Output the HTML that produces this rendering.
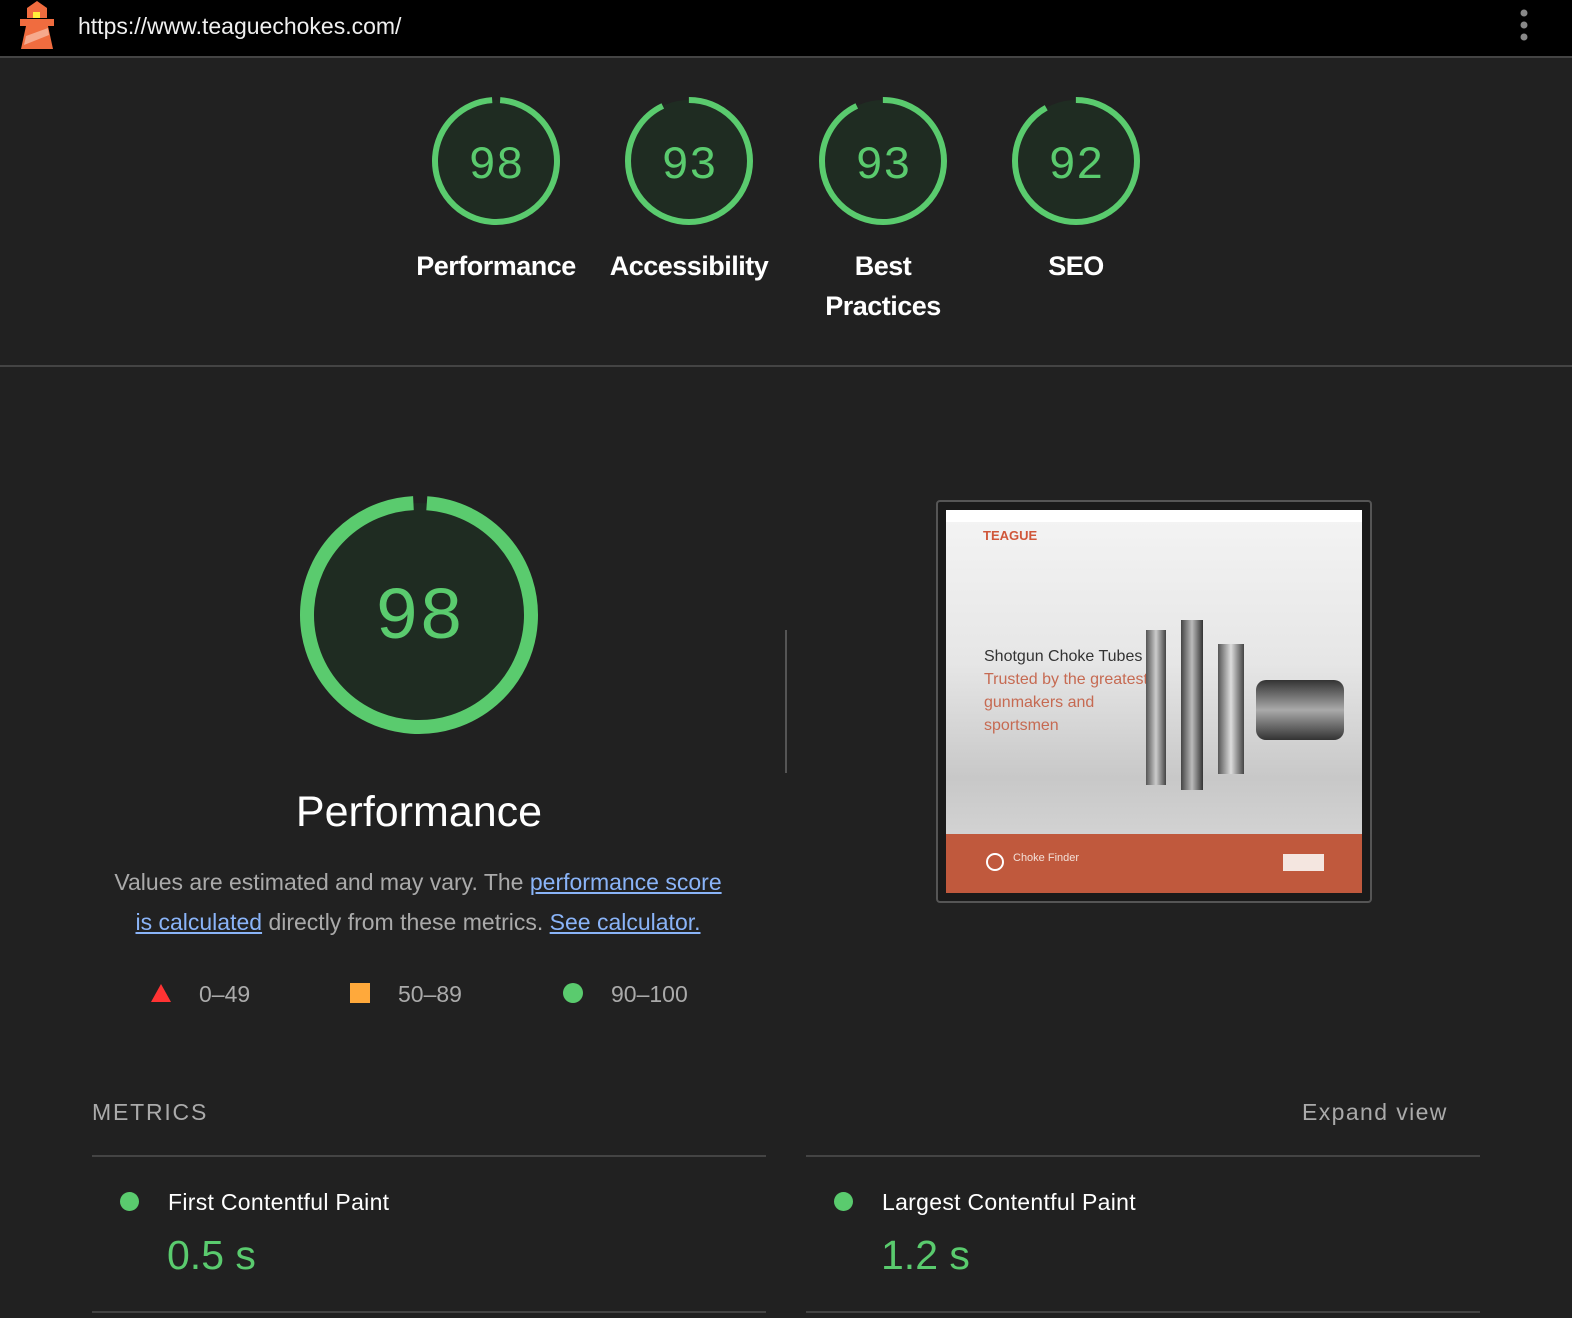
<!DOCTYPE html><html><head><style>
*{margin:0;padding:0;box-sizing:border-box}
body{width:1572px;height:1318px;background:#212121;font-family:"Liberation Sans",sans-serif;color:#fff;position:relative;overflow:hidden}
.top{position:absolute;left:0;top:0;width:1572px;height:58px;background:#000;border-bottom:2px solid #444}
.url{position:absolute;left:78px;top:13px;font-size:23px;color:#f0f0f0}
.g{position:absolute;text-align:center;font-size:27px;line-height:40px;width:200px;font-weight:bold;letter-spacing:-0.5px}
.ab{position:absolute}
</style></head><body>
<div class="top">
<svg style="position:absolute;left:20px;top:1px" width="34" height="49" viewBox="0 0 34 49"><polygon points="17,0 27,7 27,17 7,17 7,7" fill="#f06c3f"/><rect x="13" y="11" width="7" height="6" fill="#ffee3a"/><rect x="0" y="18" width="34" height="7" fill="#f06c3f"/><polygon points="6,25 28,25 33,48 1,48" fill="#f06c3f"/><polygon points="6,35 28,27 29,34 4,44" fill="#f6a98d"/></svg>
<div class="url">https://www.teaguechokes.com/</div>
<svg style="position:absolute;left:1519px;top:8px" width="10" height="36"><circle cx="5" cy="5" r="3.5" fill="#888"/><circle cx="5" cy="17" r="3.5" fill="#888"/><circle cx="5" cy="29" r="3.5" fill="#888"/></svg>
</div>
<svg style="position:absolute;left:0;top:58px" width="1572" height="260">
<g fill="#1f2c22" stroke="#5acb6e" stroke-width="6">
<circle cx="496" cy="103" r="61" stroke-dasharray="375 8" transform="rotate(-86 496 103)"/>
<circle cx="689" cy="103" r="61" stroke-dasharray="356 27" transform="rotate(-90 689 103)"/>
<circle cx="883" cy="103" r="61" stroke-dasharray="356 27" transform="rotate(-90 883 103)"/>
<circle cx="1076" cy="103" r="61" stroke-dasharray="352 31" transform="rotate(-90 1076 103)"/>
</g>
<g fill="#5acb6e" font-family="Liberation Mono, monospace" font-size="46" text-anchor="middle">
<text x="496" y="120">98</text><text x="689" y="120">93</text><text x="883" y="120">93</text><text x="1076" y="120">92</text></g>
</svg>
<div class="g" style="left:396px;top:246px">Performance</div>
<div class="g" style="left:589px;top:246px">Accessibility</div>
<div class="g" style="left:783px;top:246px">Best<br>Practices</div>
<div class="g" style="left:976px;top:246px">SEO</div>
<div style="position:absolute;left:0;top:365px;width:1572px;height:2px;background:#444"></div>
<svg style="position:absolute;left:290px;top:490px" width="260" height="260">
<circle cx="129" cy="125" r="112" fill="#1f2c22" stroke="#5acb6e" stroke-width="14" stroke-dasharray="690 14" transform="rotate(-86 129 125)"/>
<text x="129" y="148" fill="#5acb6e" font-family="Liberation Mono, monospace" font-size="74" text-anchor="middle">98</text></svg>
<div style="position:absolute;left:219px;top:788px;width:400px;text-align:center;font-size:43px">Performance</div>
<div style="position:absolute;left:68px;top:862px;width:700px;text-align:center;font-size:23px;line-height:40px;color:#aaa;white-space:nowrap">Values are estimated and may vary. The <u style="color:#8ab4f8">performance score</u><br><u style="color:#8ab4f8">is calculated</u> directly from these metrics. <u style="color:#8ab4f8">See calculator.</u></div>
<svg style="position:absolute;left:150px;top:983px" width="22" height="20"><polygon points="11,1 21,19 1,19" fill="#f33"/></svg>
<div class="ab" style="left:199px;top:981px;font-size:23px;color:#aaa">0–49</div>
<div class="ab" style="left:350px;top:983px;width:20px;height:20px;background:#ffa93b"></div>
<div class="ab" style="left:398px;top:981px;font-size:23px;color:#aaa">50–89</div>
<div class="ab" style="left:563px;top:983px;width:20px;height:20px;border-radius:50%;background:#5acb6e"></div>
<div class="ab" style="left:611px;top:981px;font-size:23px;color:#aaa">90–100</div>
<div class="ab" style="left:785px;top:630px;width:2px;height:143px;background:#555"></div>
<div class="ab" style="left:936px;top:500px;width:436px;height:403px;border:2px solid #555;border-radius:4px;background:#1a1a1a"></div>
<div class="ab" style="left:946px;top:510px;width:416px;height:383px;background:linear-gradient(#f4f4f4,#e6e6e6 40%,#c8c8c8 70%,#ddd)">
<div style="height:12px;background:#fff"></div>
<div style="position:absolute;left:37px;top:18px;color:#d0573a;font-weight:bold;font-size:13px">TEAGUE</div>
<div style="position:absolute;left:38px;top:135px;font-size:16px;color:#333;line-height:23px">Shotgun Choke Tubes<br><span style="color:#c66a52">Trusted by the greatest<br>gunmakers and<br>sportsmen</span></div>
<div style="position:absolute;left:200px;top:120px;width:20px;height:155px;background:linear-gradient(90deg,#555,#ccc,#444)"></div>
<div style="position:absolute;left:235px;top:110px;width:22px;height:170px;background:linear-gradient(90deg,#444,#bbb,#333)"></div>
<div style="position:absolute;left:272px;top:134px;width:26px;height:130px;background:linear-gradient(90deg,#555,#ddd,#444)"></div>
<div style="position:absolute;left:310px;top:170px;width:88px;height:60px;background:linear-gradient(#333,#aaa,#333);border-radius:10px"></div>
<div style="position:absolute;left:0;top:324px;width:416px;height:59px;background:#c0593d"></div>
<div style="position:absolute;left:67px;top:342px;font-size:11px;color:#f3e0d8">Choke Finder</div>
<div style="position:absolute;left:337px;top:344px;width:41px;height:17px;background:#f4e6e0"></div>
<div style="position:absolute;left:40px;top:343px;width:18px;height:18px;border:2px solid #fff;border-radius:50%"></div>
</div>
<div class="ab" style="left:92px;top:1099px;font-size:23px;letter-spacing:1.8px;color:#aaa">METRICS</div>
<div class="ab" style="left:1302px;top:1099px;font-size:23px;letter-spacing:1.4px;color:#aaa">Expand view</div>
<div class="ab" style="left:92px;top:1155px;width:674px;height:2px;background:#444"></div>
<div class="ab" style="left:806px;top:1155px;width:674px;height:2px;background:#444"></div>
<div class="ab" style="left:92px;top:1311px;width:674px;height:2px;background:#444"></div>
<div class="ab" style="left:806px;top:1311px;width:674px;height:2px;background:#444"></div>
<div class="ab" style="left:120px;top:1192px;width:19px;height:19px;border-radius:50%;background:#5acb6e"></div>
<div class="ab" style="left:168px;top:1189px;font-size:23px;letter-spacing:0.3px">First Contentful Paint</div>
<div class="ab" style="left:167px;top:1232px;font-size:41px;color:#5acb6e">0.5 s</div>
<div class="ab" style="left:834px;top:1192px;width:19px;height:19px;border-radius:50%;background:#5acb6e"></div>
<div class="ab" style="left:882px;top:1189px;font-size:23px;letter-spacing:0.3px">Largest Contentful Paint</div>
<div class="ab" style="left:881px;top:1232px;font-size:41px;color:#5acb6e">1.2 s</div>
</body></html>
